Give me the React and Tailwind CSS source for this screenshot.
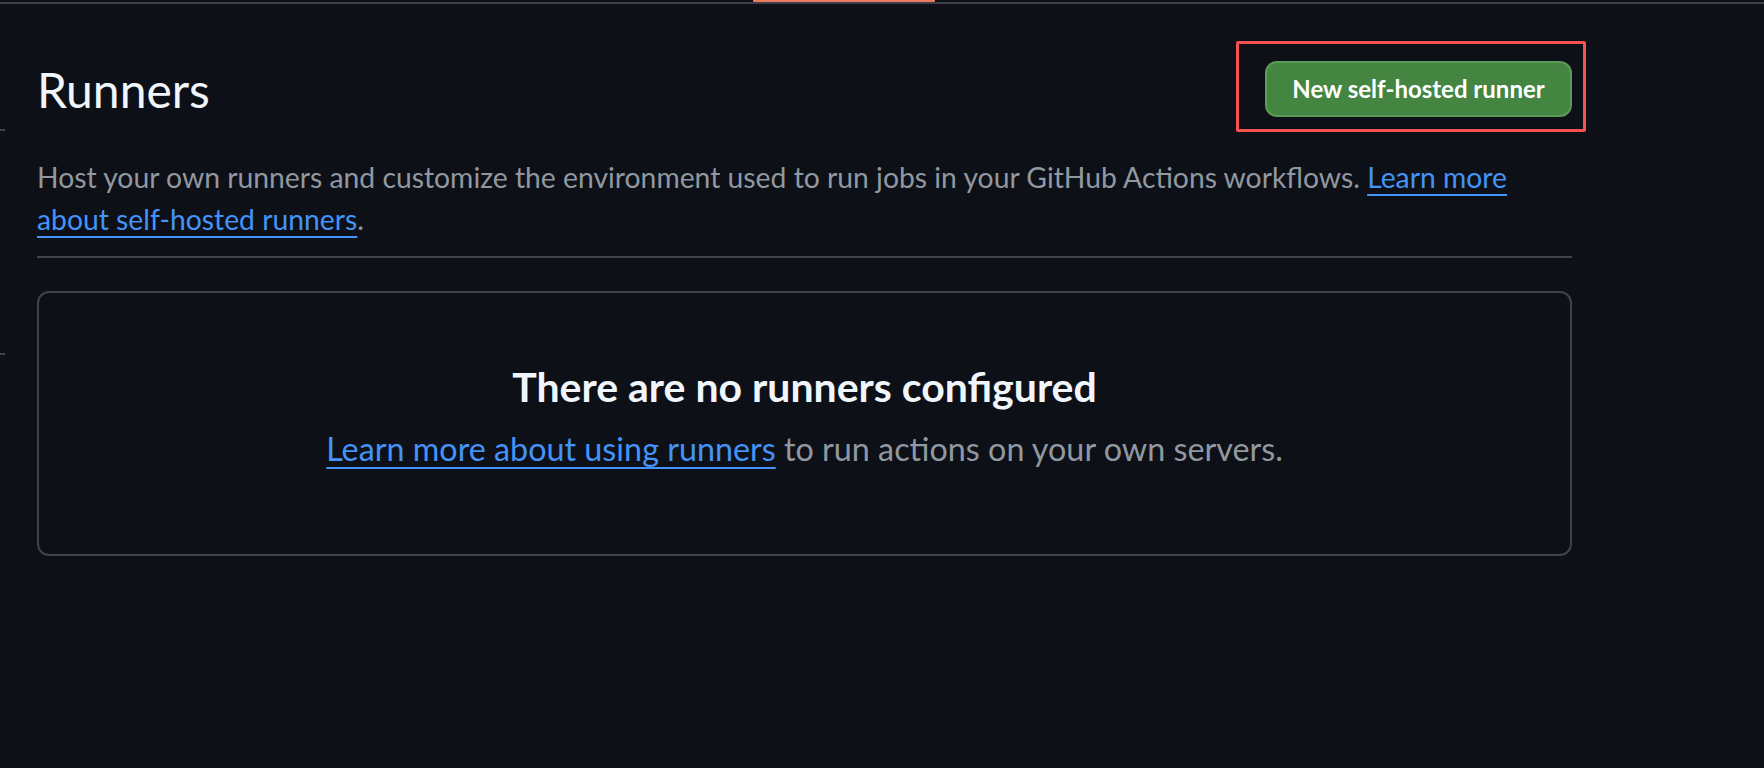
export default function App() {
  return (
    <div className="min-h-screen w-full bg-[#0d1117] font-['Lato',sans-serif] overflow-hidden">
      <div className="flex h-[2px]">
        <div className="ml-[753px] w-[182px] rounded-b-[1px] bg-[#ec7a60]" />
      </div>
      <div className="h-[2px] bg-[#3b4048]" />
      <div className="flex">
        <div className="flex w-[5px] shrink-0 flex-col">
          <div className="mt-[125px] h-[2px] bg-[#3d444d]" />
          <div className="mt-[222px] h-[2px] bg-[#3d444d]" />
        </div>
        <div className="ml-[32px] w-[1535px] shrink-0 pt-[50px]">
          <div className="flex items-start justify-between">
            <h2 className="text-[48px] font-normal leading-[72px] text-[#f0f6fc]">Runners</h2>
            <div className="relative mt-[7px]">
              <div className="pointer-events-none absolute -top-[20px] -left-[29px] -right-[14px] -bottom-[15px] rounded-[2px] border-[3px] border-[#f75252]" />
              <button className="flex h-[56px] w-[307px] items-center justify-center rounded-[12px] border-2 border-[#5b9a57] bg-[#438541] text-[24px] font-bold text-white">
                New self-hosted runner
              </button>
            </div>
          </div>
          <p className="mt-[30px] border-b-2 border-[#3d444d] pb-[16px] text-[28.3px] leading-[42px] text-[#9198a1]">
            Host your own runners and customize the environment used to run jobs in your GitHub Actions workflows.{" "}
            <a href="#" className="text-[#4493f8] underline decoration-2 underline-offset-[6px]">
              Learn more about self-hosted runners
            </a>
            .
          </p>
          <div className="mt-[33px] rounded-[12px] border-2 border-[#3d444d] px-8 pt-[64px] pb-[81px] text-center">
            <h3 className="text-[41px] font-bold leading-[60px] text-[#f0f6fc]">There are no runners configured</h3>
            <p className="mt-[8px] text-[32.3px] leading-[48px] text-[#9198a1]">
              <a href="#" className="text-[#4493f8] underline decoration-2 underline-offset-[6px]">
                Learn more about using runners
              </a>{" "}
              to run actions on your own servers.
            </p>
          </div>
        </div>
      </div>
    </div>
  );
}
